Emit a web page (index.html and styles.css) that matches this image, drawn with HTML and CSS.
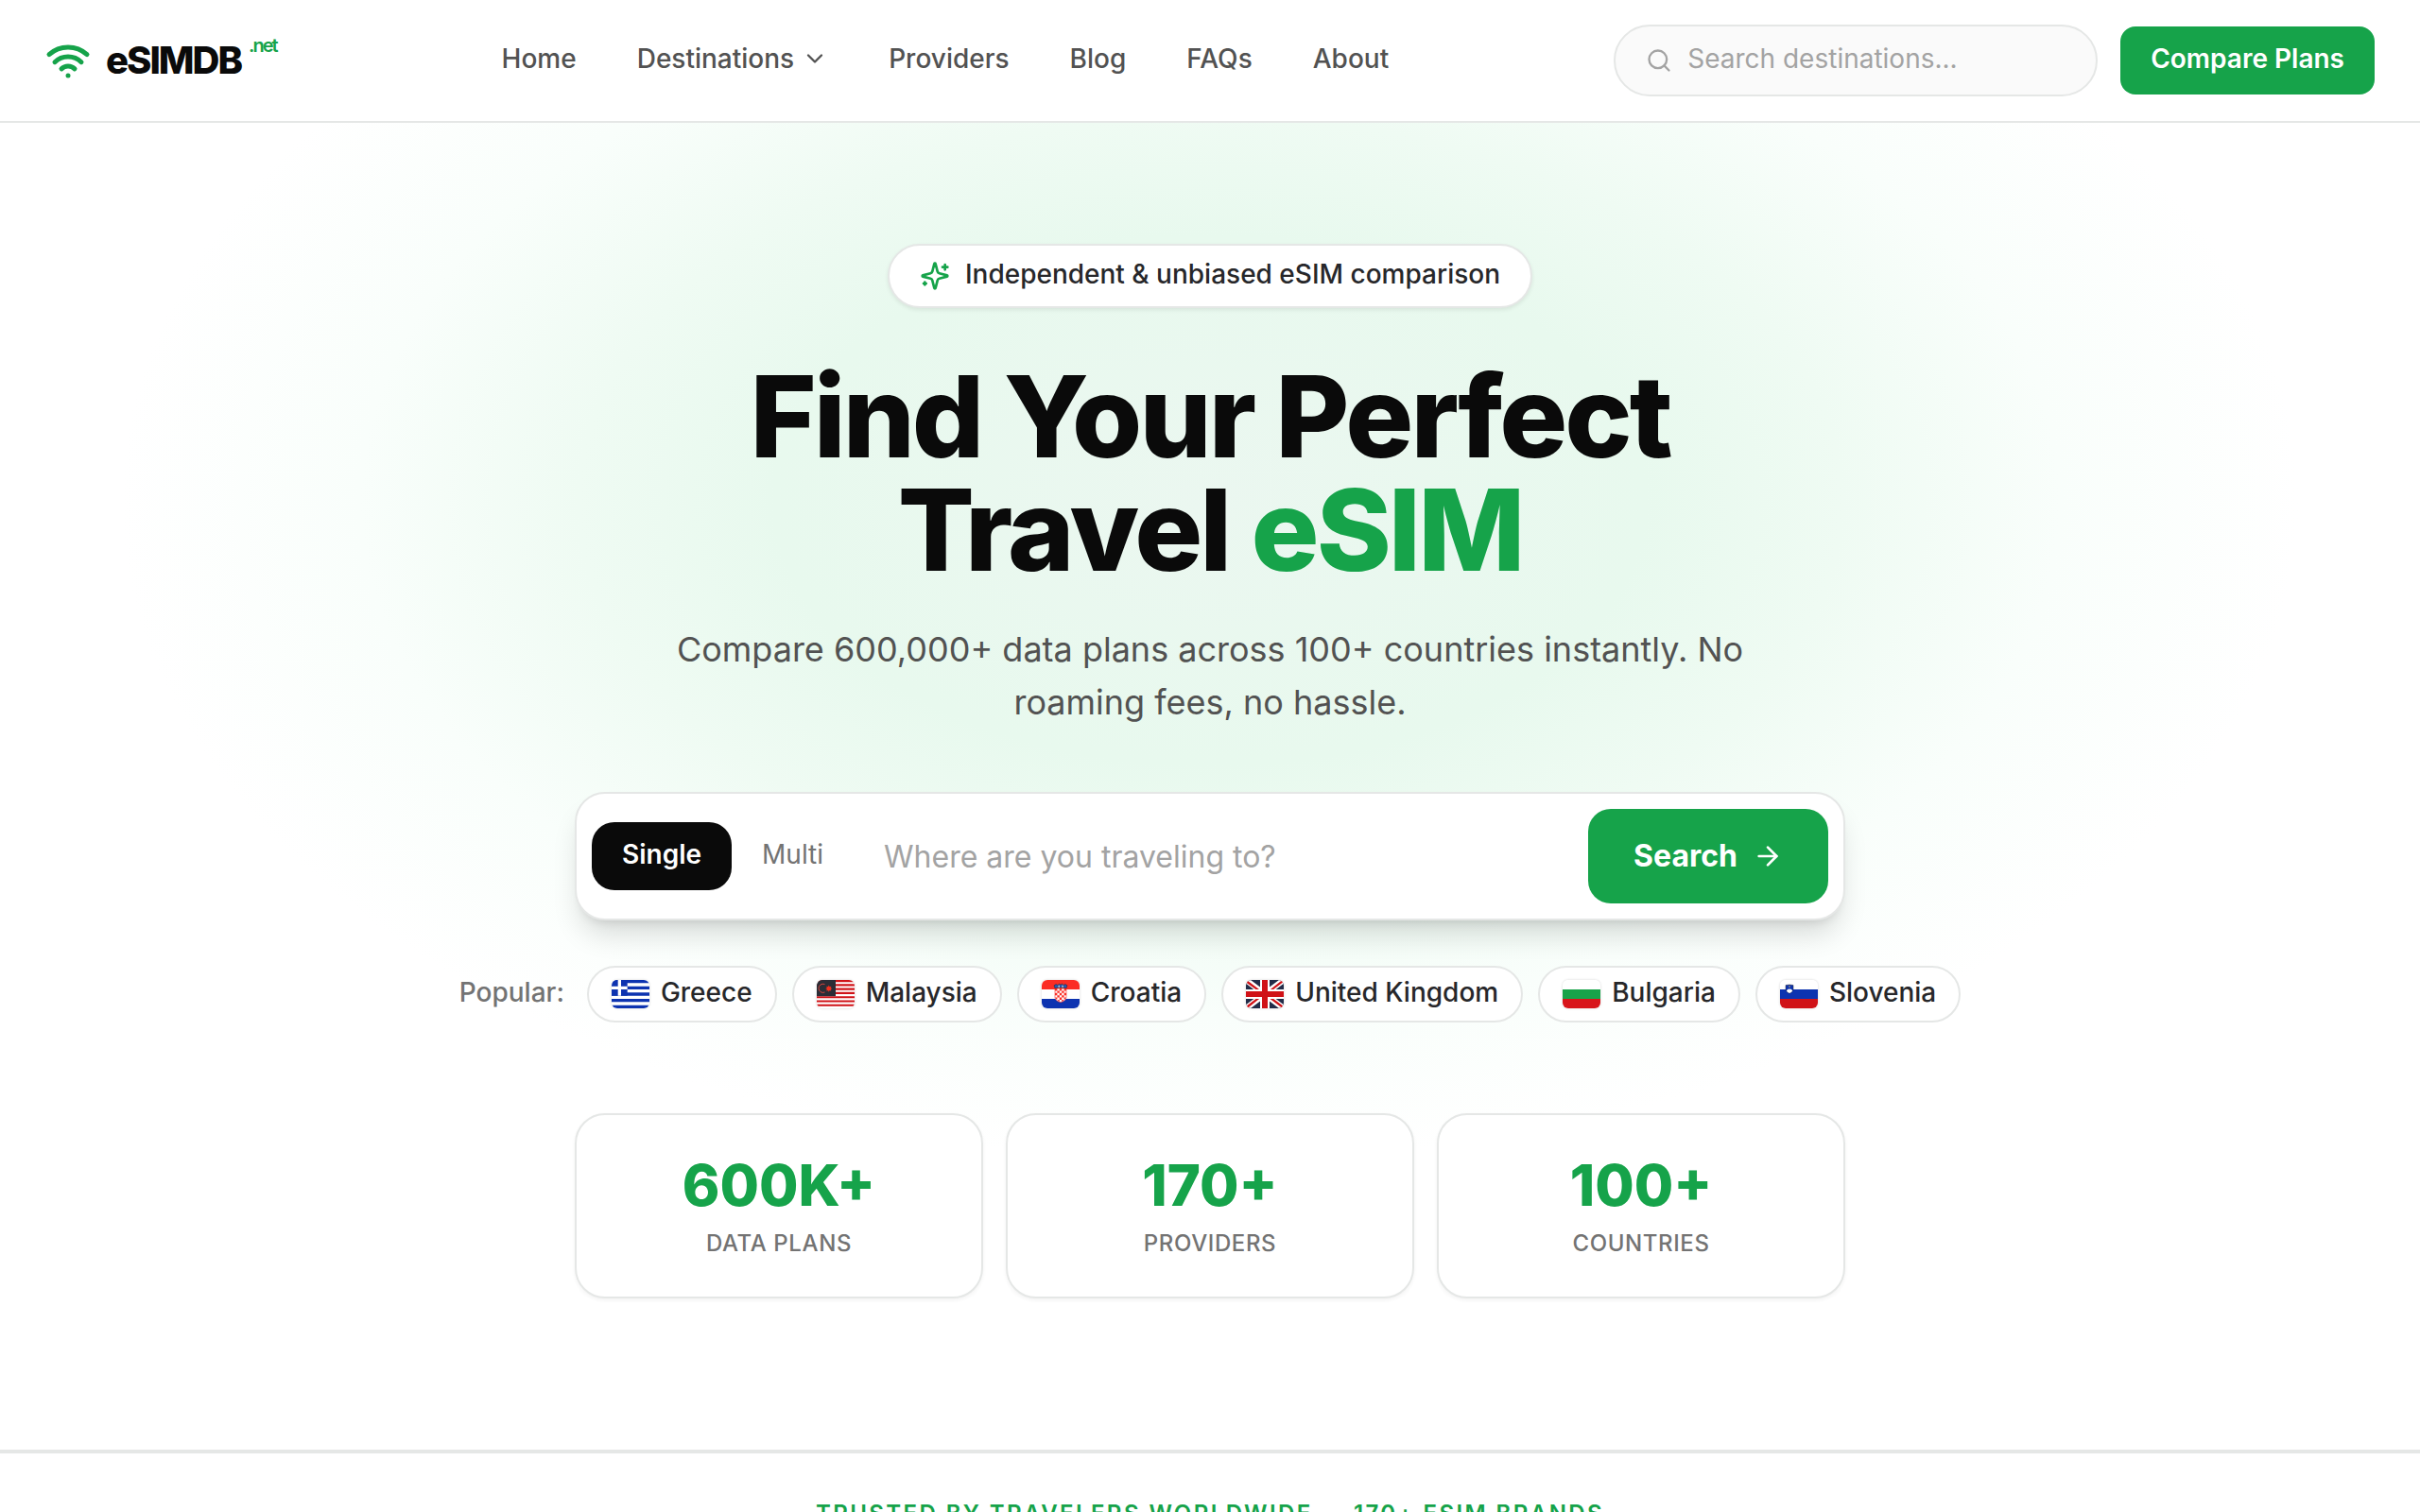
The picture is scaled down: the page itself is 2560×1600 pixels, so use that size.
FILE: index.html
```html
<!DOCTYPE html>
<html lang="en">

<head>
    <meta charset="UTF-8">
    <meta name="viewport" content="width=device-width, initial-scale=1.0">
    <title>eSIMDB.net - Find Your Perfect Travel eSIM</title>
    <link rel="stylesheet" href="styles.css">
</head>

<body>
    <header class="header">
        <a class="logo" href="#">
            <svg class="logo-icon" viewBox="0 0 24 24">
                <path d="M12 20h.01" />
                <path d="M2 8.82a15 15 0 0 1 20 0" />
                <path d="M5 12.859a10 10 0 0 1 14 0" />
                <path d="M8.5 16.429a5 5 0 0 1 7 0" />
            </svg>
            <span class="logo-text">eSIMDB</span><span class="logo-tld">.net</span>
        </a>

        <nav class="nav">
            <a href="#">Home</a>
            <a href="#">Destinations
                <svg class="chevron" viewBox="0 0 24 24"><path d="m6 9 6 6 6-6" /></svg>
            </a>
            <a href="#">Providers</a>
            <a href="#">Blog</a>
            <a href="#">FAQs</a>
            <a href="#">About</a>
        </nav>

        <div class="header-actions">
            <label class="header-search">
                <svg viewBox="0 0 24 24">
                    <circle cx="11" cy="11" r="8" />
                    <path d="m21 21-4.34-4.34" />
                </svg>
                <input type="text" placeholder="Search destinations..." aria-label="Search destinations">
            </label>
            <button class="compare-btn" type="button">Compare Plans</button>
        </div>
    </header>

    <main>
        <section class="hero">
            <div class="badge">
                <svg viewBox="0 0 24 24">
                    <path d="M9.937 15.5A2 2 0 0 0 8.5 14.063l-6.135-1.582a.5.5 0 0 1 0-.962L8.5 9.936A2 2 0 0 0 9.937 8.5l1.582-6.135a.5.5 0 0 1 .963 0L14.063 8.5A2 2 0 0 0 15.5 9.937l6.135 1.581a.5.5 0 0 1 0 .964L15.5 14.063a2 2 0 0 0-1.437 1.437l-1.582 6.135a.5.5 0 0 1-.963 0z" />
                    <path d="M20 3v4" />
                    <path d="M22 5h-4" />
                    <path d="M4 17v2" />
                    <path d="M5 18H3" />
                </svg>
                <span>Independent &amp; unbiased eSIM comparison</span>
            </div>

            <h1>Find Your Perfect<br>Travel <span class="accent">eSIM</span></h1>
            <p class="lead">Compare 600,000+ data plans across 100+ countries instantly. No roaming fees, no hassle.</p>

            <form class="search-box">
                <div class="mode">
                    <button class="mode-btn active" type="button">Single</button>
                    <button class="mode-btn" type="button">Multi</button>
                </div>
                <input type="text" placeholder="Where are you traveling to?" aria-label="Where are you traveling to?">
                <button class="search-btn" type="button">
                    <span>Search</span>
                    <svg viewBox="0 0 24 24">
                        <path d="M5 12h14" />
                        <path d="m12 5 7 7-7 7" />
                    </svg>
                </button>
            </form>

            <div class="popular">
                <span class="popular-label">Popular:</span>
                <a class="chip" href="#">
                    <svg class="flag" viewBox="0 0 40 30">
                        <rect width="40" height="30" fill="#fff" />
                        <path fill="#0d33b0" d="M0 0h40v3.33H0zM0 6.67h40V10H0zM0 13.33h40v3.34H0zM0 20h40v3.33H0zM0 26.67h40V30H0z" />
                        <rect width="16.67" height="16.67" fill="#0d33b0" />
                        <path fill="#fff" d="M6.67 0H10v16.67H6.67zM0 6.67h16.67V10H0z" />
                    </svg>
                    <span>Greece</span>
                </a>
                <a class="chip" href="#">
                    <svg class="flag" viewBox="0 0 40 30">
                        <rect width="40" height="30" fill="#fff" />
                        <path fill="#d01217" d="M0 0h40v2.14H0zM0 4.29h40v2.14H0zM0 8.57h40v2.14H0zM0 12.86h40V15H0zM0 17.14h40v2.15H0zM0 21.43h40v2.14H0zM0 25.71h40v2.15H0z" />
                        <rect width="20" height="17.14" fill="#2b2d36" />
                        <path fill="none" stroke="#d8443c" stroke-width="1" d="M8.5 4.6a4.6 4.6 0 1 0 0 8.4" />
                        <path fill="#f5301f" d="m12.8 5.6.8 1.7 1.8-.6-.7 1.7 1.7.7-1.7.8.6 1.8-1.7-.7-.8 1.7-.8-1.7-1.8.7.7-1.8-1.7-.8 1.7-.7-.7-1.7 1.8.6z" />
                    </svg>
                    <span>Malaysia</span>
                </a>
                <a class="chip" href="#">
                    <svg class="flag" viewBox="0 0 40 30">
                        <rect width="40" height="10" fill="#fb2c25" />
                        <rect y="10" width="40" height="10" fill="#fff" />
                        <rect y="20" width="40" height="10" fill="#0d33b0" />
                        <path fill="#fff" stroke="#fb2c25" stroke-width=".6" d="M14 9h12v9c0 3-3 5-6 5.500c-3-.5-6-2.500-6-5.500z" />
                        <path fill="#fb2c25" d="M14 9h2.400v2.400H14zM18.800 9h2.400v2.400h-2.400zM23.600 9H26v2.400h-2.400zM16.400 11.400h2.400v2.400h-2.400zM21.200 11.400h2.400v2.400h-2.400zM14 13.800h2.400v2.400H14zM18.800 13.800h2.400v2.400h-2.400zM23.600 13.800H26v2.400h-2.400zM16.400 16.200h2.400v2.400h-2.400zM21.200 16.200h2.400v2.400h-2.400zM14.200 18.600h2.200v2h-1zM18.800 18.600h2.400V21h-2.400zM23.600 18.600h2.200l-1.200 2h-1zM16.400 21h2.400v2zM21.200 21h2.400l-2.400 2z" />
                        <path fill="#2457b5" stroke="#2b2d36" stroke-width=".6" d="m14 8.800-1-3 2.200-1.300 1.700 1 1.400-1.300 1.700.8 1.700-.8 1.400 1.300 1.700-1L27 5.800l-1 3c-4-1-8-1-12 0z" />
                        <path fill="#b7c6c9" d="M17.500 5.800h1.400V8h-1.400zM21.400 5.800h1.400V8h-1.400z" />
                    </svg>
                    <span>Croatia</span>
                </a>
                <a class="chip" href="#">
                    <svg class="flag" viewBox="0 0 40 30">
                        <rect width="40" height="30" fill="#222c48" />
                        <path stroke="#fff" stroke-width="6" d="m0 0 40 30M40 0 0 30" />
                        <path fill="#d01217" d="M0 30v-2l12.500-9.500H16L1.500 30zM0 0h.8L16 11.500h-3.500L0 2.500zM40 30h-1.300L23.500 18.500h3.700L40 28zM40 0v1.800l-12.800 9.700H24L38.500 0z" />
                        <path stroke="#fff" stroke-width="10" d="M20 0v30M0 15h40" />
                        <path stroke="#d01217" stroke-width="6" d="M20 0v30M0 15h40" />
                    </svg>
                    <span>United Kingdom</span>
                </a>
                <a class="chip" href="#">
                    <svg class="flag" viewBox="0 0 40 30">
                        <rect width="40" height="10" fill="#fff" />
                        <rect y="10" width="40" height="10" fill="#18a34a" />
                        <rect y="20" width="40" height="10" fill="#d8141a" />
                    </svg>
                    <span>Bulgaria</span>
                </a>
                <a class="chip" href="#">
                    <svg class="flag" viewBox="0 0 40 30">
                        <rect width="40" height="10" fill="#fff" />
                        <rect y="10" width="40" height="10" fill="#0d33b0" />
                        <rect y="20" width="40" height="10" fill="#d01217" />
                        <path fill="#0d33b0" stroke="#2b2d36" stroke-width=".5" d="M6 5.500q4-1 8 0v4q0 3-4 5-4-2-4-5z" />
                        <path fill="#fff" d="m6.800 11.500 1.700-2 .7.800L10 8.700l.9 1.600.8-.8 1.600 2q-1 1.500-3.300 2.600-2.200-1.100-3.200-2.600z" />
                        <circle cx="10" cy="7" r=".7" fill="#fcd34d" />
                    </svg>
                    <span>Slovenia</span>
                </a>
            </div>

            <div class="stats">
                <div class="stat">
                    <div class="stat-value">600K+</div>
                    <div class="stat-label">Data Plans</div>
                </div>
                <div class="stat">
                    <div class="stat-value">170+</div>
                    <div class="stat-label">Providers</div>
                </div>
                <div class="stat">
                    <div class="stat-value">100+</div>
                    <div class="stat-label">Countries</div>
                </div>
            </div>
        </section>

        <section class="trusted">
            <h2>Trusted by travelers worldwide — 170+ eSIM brands</h2>
        </section>
    </main>
</body>

</html>
```
FILE: styles.css
```css
* {
    box-sizing: border-box;
}

body {
    margin: 0;
    font-family: Inter, "Liberation Sans", sans-serif;
    font-size: 28px;
    line-height: 40px;
    color: #0a0a0a;
    background: #fff;
    overflow: hidden;
}

a {
    color: inherit;
    text-decoration: none;
}

button,
input {
    font: inherit;
    border: none;
    outline: none;
}

button {
    cursor: pointer;
}

input::placeholder {
    color: #a3a3a3;
    opacity: 1;
}

svg {
    flex-shrink: 0;
    fill: none;
    stroke: currentColor;
    stroke-width: 2;
    stroke-linecap: round;
    stroke-linejoin: round;
}

/* Header */
.header {
    display: flex;
    align-items: center;
    justify-content: space-between;
    height: 130px;
    padding: 0 48px;
    background: #fff;
    border-bottom: 2px solid #e5e7e6;
}

.logo {
    display: flex;
    align-items: center;
    letter-spacing: -2px;
}

.logo-icon {
    width: 48px;
    height: 48px;
    margin-right: 16px;
    color: #16a34a;
    stroke-width: 2.5;
}

.logo-text {
    font-size: 40px;
    font-weight: 800;
    line-height: 56px;
}

.logo-tld {
    align-self: flex-start;
    margin-left: 8px;
    font-size: 20px;
    font-weight: 600;
    line-height: 24px;
    color: #16a34a;
}

.nav {
    display: flex;
    font-weight: 500;
    color: #525252;
}

.nav a {
    display: flex;
    align-items: center;
    gap: 8px;
    padding: 14px 32px 18px;
}

.chevron {
    width: 28px;
    height: 28px;
}

.header-actions {
    display: flex;
    align-items: center;
    gap: 24px;
}

.header-search {
    display: flex;
    align-items: center;
    gap: 16px;
    width: 512px;
    height: 76px;
    padding: 0 32px;
    color: #a3a3a3;
    background: #fafafa;
    border: 2px solid #e5e7e6;
    border-radius: 38px;
}

.header-search svg {
    width: 28px;
    height: 28px;
}

.header-search input {
    flex: 1;
    min-width: 0;
    padding: 0 0 4px;
    background: none;
}

.compare-btn {
    padding: 14px 32px 18px;
    font-weight: 600;
    color: #fff;
    background: #16a34a;
    border-radius: 16px;
}

/* Hero */
.hero {
    display: flex;
    flex-direction: column;
    align-items: center;
    padding: 128px 48px 160px;
    text-align: center;
    background: radial-gradient(ellipse 45% 700px at 50% 400px, #ebf7f0 0%, #e8f9ee 40%, #effbf3 58%, #f9fefb 78%, #fff 100%);
    border-bottom: 2px solid #e5e7e6;
}

.badge {
    display: flex;
    align-items: center;
    gap: 16px;
    height: 68px;
    padding: 0 32px;
    font-weight: 500;
    color: #27272a;
    background: #fff;
    border: 2px solid #e5e7e6;
    border-radius: 34px;
    box-shadow: 0 2px 4px rgba(0, 0, 0, 0.08);
}

.badge span,
.chip span {
    padding-bottom: 4px;
}

.badge svg {
    width: 32px;
    height: 32px;
    color: #16a34a;
}

h1 {
    margin: 55px 0 38px;
    font-size: 120px;
    font-weight: 800;
    line-height: 120px;
    letter-spacing: -0.025em;
}

.accent {
    color: #16a34a;
}

.lead {
    max-width: 1152px;
    margin: 0 0 67px;
    font-size: 36px;
    line-height: 56px;
    color: #525252;
}

.search-box {
    display: flex;
    align-items: center;
    width: 100%;
    max-width: 1344px;
    padding: 16px;
    background: #fff;
    border: 2px solid #e5e7e6;
    border-radius: 32px;
    box-shadow: 0 20px 30px -6px rgba(0, 0, 0, 0.14), 0 8px 12px -8px rgba(0, 0, 0, 0.14);
}

.mode {
    display: flex;
}

.mode-btn {
    padding: 14px 32px 18px;
    color: #737373;
    background: none;
    border-radius: 24px;
}

.mode-btn.active {
    font-weight: 600;
    color: #fff;
    background: #0a0a0a;
}

.search-box input {
    flex: 1;
    min-width: 0;
    padding: 2px 32px 0;
    font-size: 32px;
    line-height: 48px;
    background: none;
}

.search-btn {
    display: flex;
    align-items: center;
    gap: 16px;
    padding: 26px 48px;
    font-size: 32px;
    font-weight: 700;
    line-height: 48px;
    color: #fff;
    background: #16a34a;
    border-radius: 24px;
}

.search-btn svg {
    width: 32px;
    height: 32px;
}

.popular {
    display: flex;
    flex-wrap: wrap;
    align-items: center;
    justify-content: center;
    gap: 16px;
    margin: 48px 0 96px;
}

.popular-label {
    margin-right: 8px;
    padding-bottom: 4px;
    font-weight: 500;
    color: #737373;
}

.chip {
    display: flex;
    align-items: center;
    gap: 12px;
    height: 60px;
    padding: 0 24px;
    font-weight: 500;
    color: #27272a;
    background: #fff;
    border: 2px solid #e5e7e6;
    border-radius: 30px;
}

.flag {
    width: 40px;
    height: 30px;
    stroke: none;
    stroke-linecap: butt;
    stroke-linejoin: miter;
    border-radius: 6px;
    box-shadow: 0 0 2px 1px rgba(0, 0, 0, 0.08);
}

.stats {
    display: grid;
    grid-template-columns: repeat(3, 1fr);
    gap: 24px;
    width: 100%;
    max-width: 1344px;
}

.stat {
    padding: 38px 40px 40px;
    background: #fff;
    border: 2px solid #e5e7e6;
    border-radius: 32px;
    box-shadow: 0 2px 4px rgba(0, 0, 0, 0.05);
}

.stat-value {
    font-size: 60px;
    font-weight: 800;
    line-height: 72px;
    color: #16a34a;
}

.stat-label {
    margin-top: 10px;
    font-size: 24px;
    font-weight: 500;
    line-height: 32px;
    letter-spacing: 0.025em;
    text-transform: uppercase;
    color: #737373;
}

/* Trusted strip */
.trusted {
    padding: 48px;
    text-align: center;
    border-top: 2px solid #e5e7e6;
}

.trusted h2 {
    margin: 0;
    font-size: 24px;
    font-weight: 600;
    line-height: 32px;
    letter-spacing: 0.1em;
    text-transform: uppercase;
    color: #16a34a;
}
```
